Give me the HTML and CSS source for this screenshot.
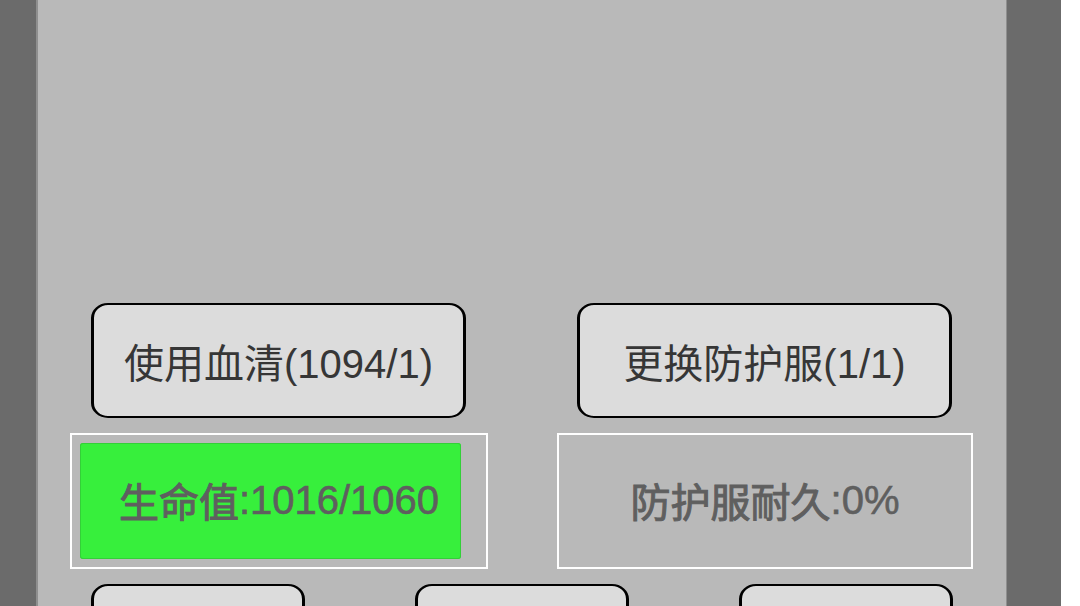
FILE: index.html
```html
<!DOCTYPE html>
<html lang="zh-CN">
<head>
<meta charset="utf-8">
<title>状态</title>
<link rel="stylesheet" href="styles.css">
</head>
<body>
<div class="screen">
  <div class="side side-left"></div>
  <main class="panel">
    <div class="scene"></div>
    <div class="row row-actions">
      <button class="btn">使用血清(1094/1)</button>
      <button class="btn">更换防护服(1/1)</button>
    </div>
    <div class="row row-stats">
      <div class="stat">
        <div class="track"><div class="fill" style="width: 95.85%"></div></div>
        <span class="stat-text"><span class="cjk">生命值</span>:1016/1060</span>
      </div>
      <div class="stat">
        <div class="track"><div class="fill" style="width: 0%"></div></div>
        <span class="stat-text"><span class="cjk">防护服耐久</span>:0%</span>
      </div>
    </div>
    <div class="row row-bottom">
      <button class="btn btn-small"></button>
      <button class="btn btn-small"></button>
      <button class="btn btn-small"></button>
    </div>
  </main>
  <div class="side side-right"></div>
  <div class="outside"></div>
</div>
</body>
</html>
```
FILE: styles.css
```css
html, body {
  margin: 0;
  padding: 0;
  height: 100%;
  overflow: hidden;
  background: #ffffff;
}
body {
  font-family: "Liberation Sans", "Noto Sans CJK SC", sans-serif;
}
.screen {
  display: flex;
  height: 606px;
  width: 1080px;
}
.side {
  background: #6b6b6b;
  flex: none;
}
.side-left {
  width: 36px;
  border-right: 2px solid #8f8f8f;
}
.side-right {
  width: 54px;
  border-left: 1px solid #8f8f8f;
}
.outside {
  flex: 1;
  background: #ffffff;
}
.panel {
  width: 968px;
  flex: none;
  background: #b9b9b9;
  display: flex;
  flex-direction: column;
  overflow: hidden;
}
.scene {
  height: 303px;
  flex: none;
}
.row {
  display: grid;
  flex: none;
}
.row-actions {
  grid-template-columns: 375px 375px;
  column-gap: 111px;
  padding: 0 53px;
}
.row-stats {
  grid-template-columns: 418px 416px;
  column-gap: 69px;
  padding: 0 32px;
  margin-top: 15px;
}
.row-bottom {
  grid-template-columns: 214px 214px 214px;
  column-gap: 110px;
  padding: 0 53px;
  margin-top: 15px;
}
.btn {
  font-family: "Liberation Sans", "Noto Sans CJK SC", sans-serif;
  font-size: 40px;
  color: #363636;
  background: #dcdcdc;
  border-style: solid;
  border-color: #000000;
  border-width: 2px 3px;
  border-radius: 17px / 15px;
  height: 115px;
  padding: 0;
  margin: 0;
  display: flex;
  align-items: center;
  justify-content: center;
  letter-spacing: 0;
}
.stat {
  position: relative;
  height: 136px;
  box-sizing: border-box;
  border: 2px solid #ffffff;
  padding: 8px;
  display: flex;
}
.track {
  flex: 1;
  display: flex;
}
.fill {
  height: 100%;
  background: #37ef3c;
  border-radius: 3px;
  box-shadow: inset 0 0 0 1px #33d038;
}
.stat-text {
  position: absolute;
  left: 0;
  right: 0;
  top: -2px;
  bottom: 0;
  display: flex;
  align-items: center;
  justify-content: center;
  font-size: 40px;
  color: #5f5f5f;
  -webkit-text-stroke: 0.6px #5f5f5f;
}
.cjk {
  font-weight: normal;
  -webkit-text-stroke: 1px #5f5f5f;
}
```
